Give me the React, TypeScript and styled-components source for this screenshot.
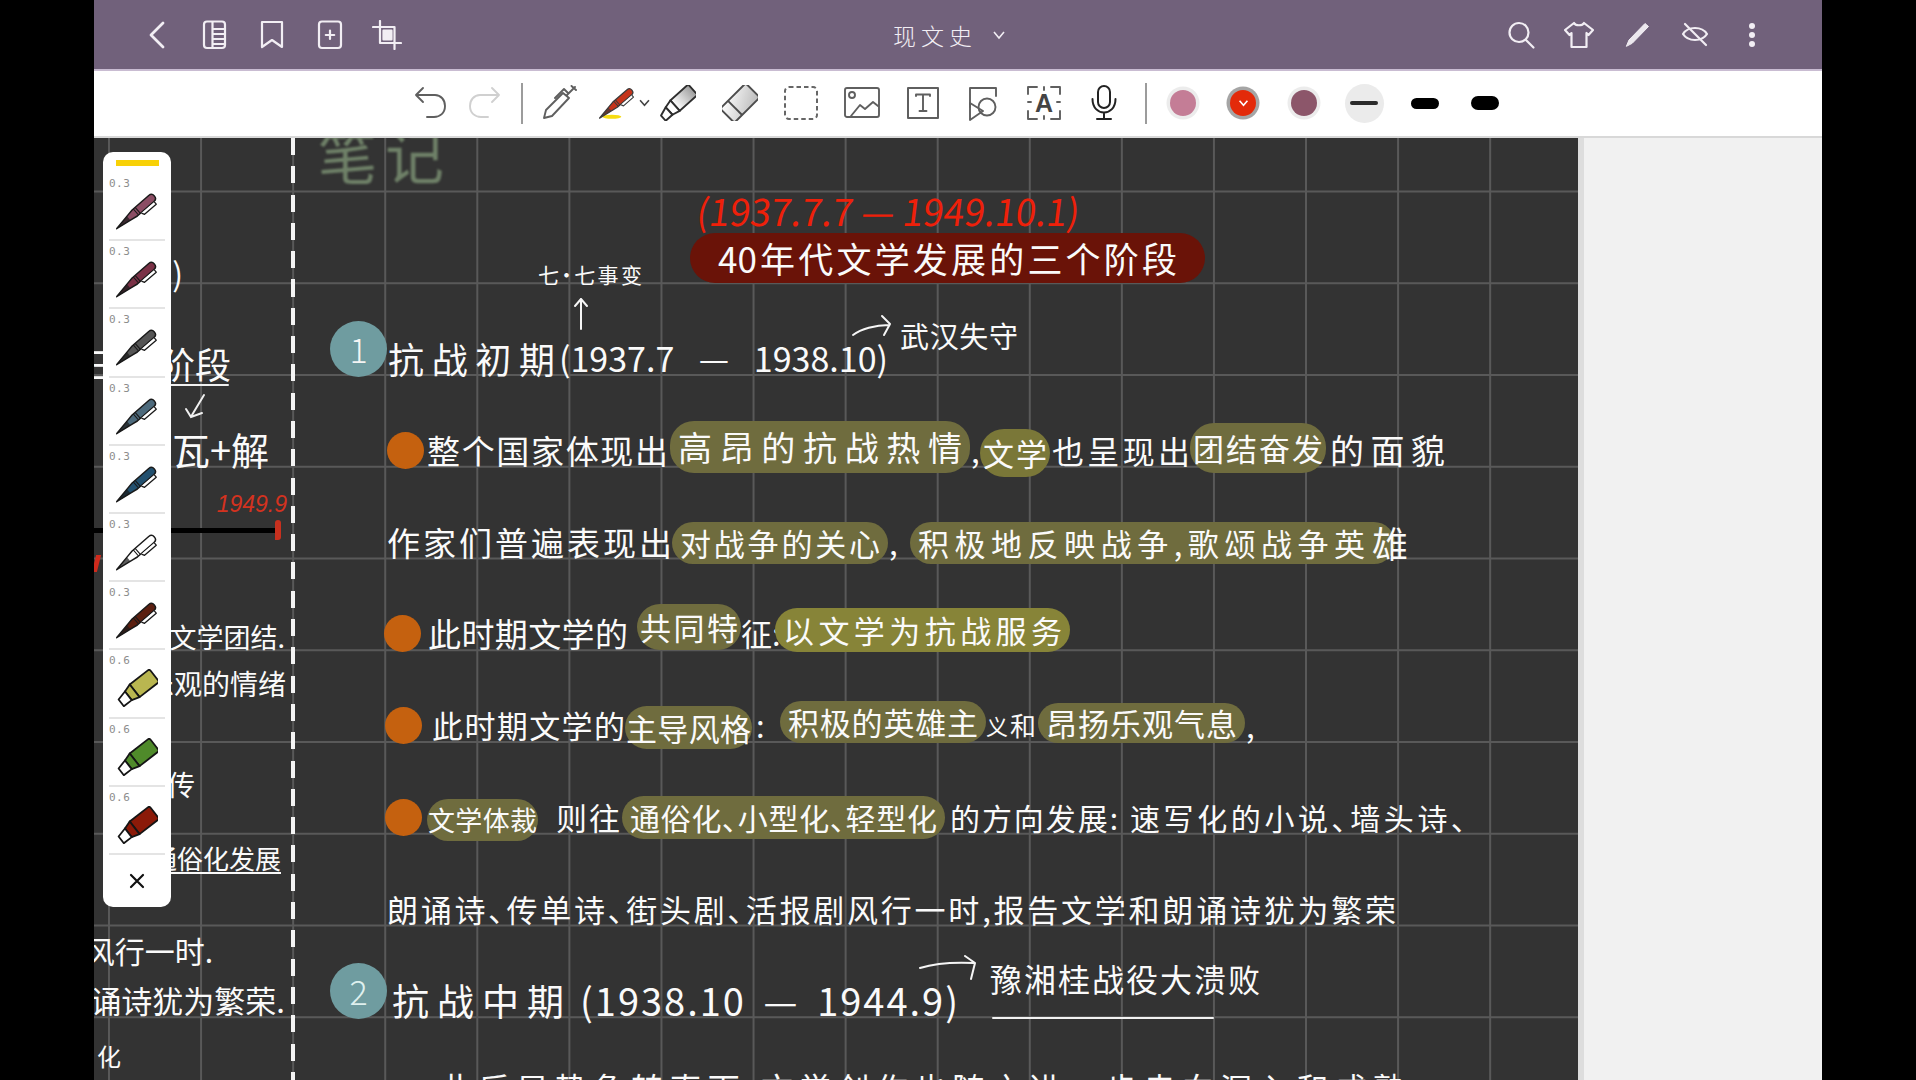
import React from "react";
import styled, { createGlobalStyle } from "styled-components";

const Global = createGlobalStyle`
  html, body { margin: 0; padding: 0; background: #000; }
  * { box-sizing: border-box; }
`;

const hand = `"Noto Sans CJK SC", "Noto Sans", sans-serif`;

const Page = styled.div`
  width: 1916px;
  height: 1080px;
  overflow: hidden;
  background: #000;
  display: flex;
  justify-content: center;
`;
const App2 = styled.div`
  width: 1728px;
  height: 100%;
  display: flex;
  flex-direction: column;
  background: #fff;
`;
const TopBar = styled.header`
  height: 71px;
  flex: none;
  background: #71617b;
  border-bottom: 2px solid #c9bcd2;
  display: flex;
  align-items: center;
  padding: 0 42px 0 34px;
`;
const IconGroup = styled.div`
  display: flex;
  align-items: center;
`;
const TopSlot = styled.div`
  width: 57.6px;
  height: 40px;
  display: flex;
  align-items: center;
  justify-content: center;
  svg { width: 30px; height: 30px; fill: none; stroke: #f2eef4; stroke-width: 2.2; stroke-linecap: round; stroke-linejoin: round; }
`;
const TitleGroup = styled.div`
  margin-left: 477px;
  display: flex;
  align-items: center;
  gap: 15px;
  color: #f2eef4;
  font: 300 23px ${hand};
  letter-spacing: 5px;
  svg { width: 14px; height: 10px; fill: none; stroke: #f2eef4; stroke-width: 1.6; }
`;
const RightGroup = styled(IconGroup)`
  margin-left: auto;
  margin-right: -1px;
`;
const ToolBar = styled.div`
  height: 67px;
  flex: none;
  background: #fff;
  display: flex;
  align-items: center;
  padding: 0 0 3px 308px;
`;
const Tool = styled.div<{ $w?: number }>`
  width: ${(p) => p.$w ?? 60.6}px;
  flex: none;
  height: 44px;
  position: relative;
  display: flex;
  align-items: center;
  justify-content: center;
  svg { width: 36px; height: 36px; }
`;
const Sep = styled.div<{ $l: number; $r: number }>`
  width: 2px;
  height: 41px;
  flex: none;
  background: #9c9c9c;
  margin: 0 ${(p) => p.$r}px 0 ${(p) => p.$l}px;
`;
const ToolCaret = styled.svg`
  position: absolute;
  right: -3px;
  top: 18px;
  && { width: 13px; height: 8px; }
  fill: none;
  stroke: #444;
  stroke-width: 1.8;
`;
const ColorDot = styled.div<{ $c: string; $ring: string }>`
  width: 26px;
  height: 26px;
  border-radius: 50%;
  background: ${(p) => p.$c};
  box-shadow: 0 0 0 3.5px ${(p) => p.$ring};
  display: flex;
  align-items: center;
  justify-content: center;
  svg { width: 11px; height: 8px; fill: none; stroke: #fff; stroke-width: 2; }
`;
const ThickBack = styled.div`
  width: 39px;
  height: 39px;
  border-radius: 50%;
  background: #ebebeb;
  display: flex;
  align-items: center;
  justify-content: center;
`;
const Thick = styled.div<{ $h: number }>`
  width: 28px;
  height: ${(p) => p.$h}px;
  border-radius: ${(p) => p.$h / 2}px;
  background: ${(p) => (p.$h < 6 ? "#2b2b2b" : "#000")};
`;
const Workspace = styled.div`
  flex: 1;
  min-height: 0;
  display: flex;
  border-top: 2px solid #d8d8d8;
  margin-top: -2px;
`;
const Canvas = styled.main`
  width: 1484px;
  flex: none;
  position: relative;
  overflow: hidden;
  display: flex;
  color: #fafafa;
  font-family: ${hand};
  font-weight: 400;
  font-feature-settings: "palt";
  background-color: #333333;
  background-image: linear-gradient(to right, #595959 2px, transparent 2px),
    linear-gradient(to bottom, #595959 2px, transparent 2px);
  background-size: 92.08px 91.75px;
  background-position: 14px 52.5px;
`;
const Side = styled.aside`
  flex: 1;
  background: #f1f1f1;
  border-left: 6px solid #dddddd;
`;
const LeftNotes = styled.section`
  width: 197px;
  flex: none;
  overflow: hidden;
  display: flex;
  flex-direction: column;
  position: relative;
`;
const LeftLine = styled.div<{ $mt: number; $h: number; $right: number; $size: number }>`
  flex: none;
  margin-top: ${(p) => p.$mt}px;
  height: ${(p) => p.$h}px;
  line-height: ${(p) => p.$h}px;
  padding-right: ${(p) => p.$right}px;
  font-size: ${(p) => p.$size}px;
  text-align: right;
  white-space: nowrap;
  display: flex;
  justify-content: flex-end;
`;
const LeftRed = styled(LeftLine)`
  color: #d4321f;
  font-style: italic;
  font-family: "Liberation Sans", sans-serif;
  font-weight: 400;
`;
const LeftUnder = styled(LeftLine)`
  text-decoration: underline;
  text-decoration-thickness: 2px;
  text-underline-offset: 3px;
`;
const LeftRule = styled.div`
  flex: none;
  margin-top: 6px;
  width: 181px;
  height: 5px;
  background: #000;
`;
const LeftSketch = styled.svg`
  flex: none;
  display: block;
  margin-top: 2px;
  margin-bottom: 2px;
  width: 197px;
  height: 40px;
  fill: none;
  stroke: #f0f0f0;
  stroke-width: 2;
  stroke-linecap: round;
`;
const RedMark = styled.div`
  position: absolute;
  left: 181px;
  top: 382px;
  width: 6px;
  height: 20px;
  border-radius: 3px 3px 3px 0;
  background: #c8301e;
`;
const RedSliver = styled.div`
  position: absolute;
  left: 0;
  top: 417px;
  width: 5px;
  height: 17px;
  background: #cf2a1c;
  transform: skewX(-14deg);
`;
const Divider = styled.div`
  width: 4px;
  flex: none;
  background-image: repeating-linear-gradient(to bottom, #f4f4f4 0, #f4f4f4 17px, transparent 17px, transparent 28.3px);
`;
const MainNotes = styled.section`
  flex: 1;
  min-width: 0;
  display: flex;
  flex-direction: column;
`;
const TitleRow = styled.div`
  flex: none;
  height: 54px;
  padding: 0 0 14px 23px;
  display: flex;
  align-items: flex-end;
`;
const BigTitle = styled.div`
  color: #6f8168;
  font-size: 59px;
  line-height: 60px;
  letter-spacing: 8px;
  margin-bottom: -6px;
  filter: blur(0.8px);
`;
const DateRow = styled.div`
  flex: none;
  height: 41px;
  padding-left: 402px;
  color: #ee200a;
  font-size: 37px;
  font-weight: 400;
  line-height: 36px;
  white-space: nowrap;
  transform: skewX(-7deg);
`;
const PillTitle = styled.div`
  flex: none;
  margin-left: 395px;
  width: 515px;
  height: 50px;
  line-height: 50px;
  border-radius: 25px;
  padding: 0 28px;
  background: #6a1308;
  font-size: 35px;
  text-align-last: justify;
`;
const Line = styled.div<{ $h?: number }>`
  flex: none;
  height: ${(p) => p.$h ?? 91.75}px;
  position: relative;
  display: flex;
  align-items: flex-end;
`;
const Seg = styled.span<{ $gap: number; $w: number; $hl?: string; $pad?: number; $padR?: number; $size?: number; $drop?: number; $h?: number; $track?: number }>`
  flex: none;
  margin-left: ${(p) => p.$gap}px;
  width: ${(p) => p.$w}px;
  height: ${(p) => p.$h ?? 46}px;
  line-height: ${(p) => p.$h ?? 46}px;
  margin-bottom: ${(p) => -(p.$drop ?? 5)}px;
  padding: 0 ${(p) => p.$padR ?? p.$pad ?? (p.$hl ? 8 : 0)}px 0 ${(p) => p.$pad ?? (p.$hl ? 8 : 0)}px;
  font-size: ${(p) => p.$size ?? 31}px;
  letter-spacing: ${(p) => p.$track ?? 0}px;
  background: ${(p) => p.$hl ?? "transparent"};
  border-radius: 24px;
  text-align-last: justify;
`;
const Bullet = styled.span<{ $gap: number }>`
  flex: none;
  margin-left: ${(p) => p.$gap}px;
  width: 37px;
  height: 37px;
  margin-bottom: -1px;
  border-radius: 50%;
  background: #c5610f;
`;
const NumberBadge = styled.span<{ $gap: number; $c: string }>`
  flex: none;
  margin-left: ${(p) => p.$gap}px;
  width: 57px;
  height: 56px;
  margin-bottom: -1px;
  border-radius: 50%;
  background: #6f9ca0;
  color: ${(p) => p.$c};
  font-size: 34px;
  font-weight: 300;
  line-height: 56px;
  text-align: center;
`;
const Note = styled.span<{ $left: number; $top: number; $w: number; $size: number }>`
  position: absolute;
  left: ${(p) => p.$left}px;
  top: ${(p) => p.$top}px;
  width: ${(p) => p.$w}px;
  font-size: ${(p) => p.$size}px;
  line-height: 1.15;
  text-align-last: justify;
`;
const NoteArrow = styled.svg<{ $left: number; $top: number }>`
  position: absolute;
  left: ${(p) => p.$left}px;
  top: ${(p) => p.$top}px;
  fill: none;
  stroke: #f6f6f6;
  stroke-width: 2;
  stroke-linecap: round;
  stroke-linejoin: round;
`;
const NoteUnderline = styled.span`
  position: absolute;
  left: 697px;
  top: 90px;
  width: 222px;
  height: 2px;
  background: #f2f2f2;
  border-radius: 2px;
`;
const CutLine = styled.div`
  flex: none;
  padding: 47px 0 0 145px;
  font-size: 32px;
  line-height: 44px;
  width: 1110px;
  text-align-last: justify;
`;
const Tray = styled.nav`
  position: absolute;
  left: 9px;
  top: 14px;
  width: 68px;
  height: 755px;
  border-radius: 10px;
  background: #fff;
  padding: 8px 0 0;
  display: flex;
  flex-direction: column;
`;
const TrayBar = styled.div`
  width: 43px;
  height: 6px;
  margin: 0 auto 7px;
  background: #f8d106;
`;
const TrayItem = styled.div`
  height: 68.2px;
  flex: none;
  margin: 0 6px;
  border-bottom: 2px solid #e4e4e4;
  display: flex;
  flex-direction: column;
  align-items: center;
  padding-top: 4px;
  svg { width: 42px; height: 38px; margin-top: 1px; display: block; }
`;
const TrayLabel = styled.div`
  align-self: flex-start;
  color: #8d8d8d;
  font: 400 11px/14px "DejaVu Sans Mono", monospace;
  letter-spacing: 0.5px;
`;
const TrayClose = styled.div`
  flex: 1;
  display: flex;
  align-items: center;
  justify-content: center;
  svg { width: 16px; height: 16px; stroke: #111; stroke-width: 2.2; stroke-linecap: round; fill: none; }
`;

const PenShape = ({ color, dark = "#1a1a1a" }: { color: string; dark?: string }) => (
  <g transform="translate(21 19) rotate(-41)">
    <path d="M-27 0 L-9 -3 L-3 -4 H19 Q23 -4 23 0 Q23 4 19 4 H-3 L-9 3 Z" fill={color} stroke={dark} strokeWidth="1.5" strokeLinejoin="round" />
    <path d="M-1.5 -4 V4 M1 -4 V4" stroke={dark} strokeWidth="1.1" />
    <path d="M-27 0 L-11 -2.6 V2.6 Z" fill={dark} opacity=".7" />
    <path d="M2 4.5 L3.5 7.5 H19 V4.5" fill="#fff" stroke={dark} strokeWidth="1.3" strokeLinejoin="round" />
  </g>
);

const MarkerShape = ({ color }: { color: string }) => (
  <g transform="translate(21 20) rotate(-38)" stroke="#151515" strokeWidth="1.8" strokeLinejoin="round">
    <path d="M-3 -8 H20 Q22 -8 22 -6 V6 Q22 8 20 8 H-3 Z" fill={color} />
    <path d="M-3 -8 L-11 -5.5 V5.5 L-3 8 Z" fill={color} />
    <path d="M-11 -5.5 L-21 -3 L-21 5.5 H-11 Z" fill="#fff" />
  </g>
);

const Icons = {
  back: <svg viewBox="0 0 30 30"><path d="M21 3 L9 15 L21 27" strokeWidth="2.8" /></svg>,
  outline: <svg viewBox="0 0 30 30"><rect x="5" y="1.5" width="21" height="26.5" rx="3" /><path d="M13.5 2 V28 M13.5 9 H26 M13.5 14 H26 M13.5 19 H26 M13.5 24 H26" /></svg>,
  bookmark: <svg viewBox="0 0 30 30"><path d="M5 2 H25 V27 L15 20 L5 27 Z" /></svg>,
  add: <svg viewBox="0 0 30 30"><rect x="4" y="1.5" width="22" height="26.5" rx="3" /><path d="M15 10.5 V19 M10.8 15 H19.2" /></svg>,
  crop: <svg viewBox="0 0 30 30"><path d="M8 1 V23 H29 M1 7 H22.5 V29" /><rect x="11.5" y="10.5" width="8" height="9" fill="#f2eef4" /></svg>,
  search: <svg viewBox="0 0 30 30"><circle cx="12" cy="12.5" r="9.5" /><path d="M19 20 L26.5 27.5" /></svg>,
  shirt: <svg viewBox="0 0 30 30"><path d="M10 3 C11.5 6 18.5 6 20 3 L29 10 L24.5 15 L22.5 13 V27 H7.5 V13 L5.5 15 L1 10 Z" /></svg>,
  pen: <svg viewBox="0 0 30 30"><path d="M4.5 26 L7 20 L23 3.5 L26.5 6.5 L10.5 23 Z" fill="#ece8ee" strokeWidth="1" /></svg>,
  eye: <svg viewBox="0 0 30 30"><path d="M3 14 C8 6 22 6 27 14 C22 22 8 22 3 14 Z" /><path d="M5 4 L26 25" /></svg>,
  dots: <svg viewBox="0 0 30 30"><g fill="#f2eef4" stroke="none"><circle cx="15" cy="6" r="3" /><circle cx="15" cy="15" r="3" /><circle cx="15" cy="24" r="3" /></g></svg>,
};

const stroke = { fill: "none", stroke: "#5f5f5f", strokeWidth: 1.9, strokeLinecap: "round" as const, strokeLinejoin: "round" as const };

const Undo = ({ color }: { color: string }) => (
  <svg viewBox="0 0 36 36" {...stroke} stroke={color}><path d="M11 3 L4 10 L11 17 M4 10 H23 C29 10 33 15 33 21 C33 28 28 32 22 32 H15" /></svg>
);
const Redo = ({ color }: { color: string }) => (
  <svg viewBox="0 0 36 36" {...stroke} stroke={color}><path d="M25 3 L32 10 L25 17 M32 10 H13 C7 10 3 15 3 21 C3 28 8 32 14 32 H21" /></svg>
);

const ToolIcons = {
  pencil: <svg viewBox="0 0 36 36" {...stroke}><path d="M2 33 L4 25 L21 8 L27 13 L10 31 Z M25 10 L33 2 M29.5 1 L34 5 M13 13 L22 4 L26 8" /></svg>,
  pen: (
    <svg viewBox="0 0 42 38"><ellipse cx="15" cy="35" rx="11" ry="2.4" fill="#f6dc12" /><PenShape color="#c5341b" dark="#3b3b3b" /></svg>
  ),
  marker: (
    <svg viewBox="0 0 36 36">
      <defs><linearGradient id="mk" x1="0" y1="0" x2="1" y2="0"><stop offset="0" stopColor="#fff" /><stop offset="1" stopColor="#9d9d9d" /></linearGradient></defs>
      <g transform="translate(18 18) rotate(-42)" fill="#fff" stroke="#2e2e2e" strokeWidth="1.9" strokeLinejoin="round">
        <path d="M-4 -7 H20 V7 H-4 Z" fill="url(#mk)" /><path d="M-4 -7 L-12 -5 V5 L-4 7 Z" /><path d="M-12 -5 L-21 -2 V5 H-12 Z" />
      </g>
    </svg>
  ),
  eraser: (
    <svg viewBox="0 0 36 36">
      <defs><linearGradient id="er" x1="0" y1="0" x2="1" y2="1"><stop offset="0" stopColor="#fff" /><stop offset="1" stopColor="#b9b9b9" /></linearGradient></defs>
      <g transform="translate(18 18) rotate(-45)" stroke="#4d4d4d" strokeWidth="1.9">
        <rect x="-18" y="-10" width="36" height="20" rx="2.5" fill="url(#er)" /><path d="M-7 -10 V10" />
      </g>
    </svg>
  ),
  lasso: <svg viewBox="0 0 36 36"><rect x="2" y="2" width="32" height="32" rx="4" fill="none" stroke="#666" strokeWidth="2" strokeDasharray="4.5 3" /></svg>,
  image: <svg viewBox="0 0 36 36" {...stroke}><rect x="1" y="3" width="34" height="29" rx="2" /><circle cx="8" cy="10" r="3" /><path d="M7 31 L16 20 L21 24 L29 17 L34 21" /></svg>,
  text: <svg viewBox="0 0 36 36" {...stroke}><rect x="3" y="3" width="30" height="30" strokeWidth="2" /><path d="M11 11 V9.5 H25 V11 M18 9.5 V26 M14.5 26 H21.5" /></svg>,
  shape: <svg viewBox="0 0 36 36" {...stroke}><path d="M5 22 V3 H31 V11" /><circle cx="22" cy="22" r="8.5" /><path d="M5 18 L18 26 L5 35 Z" /></svg>,
  ocr: (
    <svg viewBox="0 0 36 36" {...stroke}>
      <path d="M2 9 V2 H11 M25 2 H34 V9 M2 26 V34 H11 M25 34 H34 V26 M18 2 V5 M18 31 V34 M2 17 H5 M31 17 H34" />
      <text x="18" y="27" textAnchor="middle" fontFamily="Liberation Sans" fontWeight="700" fontSize="25" fill="#444" stroke="none">A</text>
    </svg>
  ),
  mic: <svg viewBox="0 0 36 36" fill="none" stroke="#222" strokeWidth="2" strokeLinecap="round"><rect x="12" y="1" width="12" height="22" rx="6" /><path d="M6.5 14 C6.5 32 29.5 32 29.5 14 M18 28 V34 M11 34 H25" /></svg>,
};

const Caret = () => <svg viewBox="0 0 14 10"><path d="M2 2 L7 8 L12 2" /></svg>;

type S = { x: number; e: number; t: string; hl?: string; size?: number; drop?: number; h?: number; track?: number; pad?: number; padR?: number };

const HL = "#6f6c3e";
const HL2 = "#7a7738";
const HL3 = "#878438";
const ORIGIN = 295;

const NoteRow = ({ segs, bullet, children }: { segs: S[]; bullet?: number; children?: React.ReactNode }) => {
  let end = ORIGIN;
  const items: React.ReactNode[] = [];
  if (bullet) {
    items.push(<Bullet key="b" $gap={bullet - end} />);
    end = bullet + 37;
  }
  segs.forEach((s, i) => {
    items.push(
      <Seg key={i} $gap={s.x - end} $w={s.e - s.x} $hl={s.hl} $pad={s.pad} $padR={s.padR} $size={s.size} $drop={s.drop} $h={s.h} $track={s.track}>
        {s.t}
      </Seg>
    );
    end = s.e;
  });
  return (
    <Line>
      {items}
      {children}
    </Line>
  );
};

const pens: [string, string][] = [
  ["0.3", "#8b4d64"],
  ["0.3", "#7a3146"],
  ["0.3", "#555555"],
  ["0.3", "#4d6a7c"],
  ["0.3", "#22506f"],
  ["0.3", "#ffffff"],
  ["0.3", "#5b1f10"],
];
const markers: [string, string][] = [
  ["0.6", "#b9b650"],
  ["0.6", "#4f8a2a"],
  ["0.6", "#8b1a08"],
];

export default function App() {
  return (
    <Page>
      <Global />
      <App2>
        <TopBar>
          <IconGroup>
            <TopSlot>{Icons.back}</TopSlot>
            <TopSlot>{Icons.outline}</TopSlot>
            <TopSlot>{Icons.bookmark}</TopSlot>
            <TopSlot>{Icons.add}</TopSlot>
            <TopSlot>{Icons.crop}</TopSlot>
          </IconGroup>
          <TitleGroup>
            现文史
            <Caret />
          </TitleGroup>
          <RightGroup>
            <TopSlot>{Icons.search}</TopSlot>
            <TopSlot>{Icons.shirt}</TopSlot>
            <TopSlot>{Icons.pen}</TopSlot>
            <TopSlot>{Icons.eye}</TopSlot>
            <TopSlot>{Icons.dots}</TopSlot>
          </RightGroup>
        </TopBar>
        <ToolBar>
          <Tool $w={55}><Undo color="#5f5f5f" /></Tool>
          <Tool $w={55}><Redo color="#d0d0d0" /></Tool>
          <Sep $l={9} $r={9} />
          <Tool $w={55}>{ToolIcons.pencil}</Tool>
          <Tool>
            {ToolIcons.pen}
            <ToolCaret viewBox="0 0 14 9"><path d="M2 1.5 L7 7 L12 1.5" /></ToolCaret>
          </Tool>
          <Tool>{ToolIcons.marker}</Tool>
          <Tool $w={63}>{ToolIcons.eraser}</Tool>
          <Tool>{ToolIcons.lasso}</Tool>
          <Tool>{ToolIcons.image}</Tool>
          <Tool>{ToolIcons.text}</Tool>
          <Tool>{ToolIcons.shape}</Tool>
          <Tool>{ToolIcons.ocr}</Tool>
          <Tool>{ToolIcons.mic}</Tool>
          <Sep $l={10} $r={6} />
          <Tool $w={60.4}><ColorDot $c="#c47d96" $ring="#ececec" /></Tool>
          <Tool $w={60.4}>
            <ColorDot $c="#e32a0a" $ring="#a5a5a5"><Caret /></ColorDot>
          </Tool>
          <Tool $w={60.4}><ColorDot $c="#8c566a" $ring="#ececec" /></Tool>
          <Tool $w={60.4}><ThickBack><Thick $h={4} /></ThickBack></Tool>
          <Tool $w={60.4}><Thick $h={11} /></Tool>
          <Tool $w={60.4}><Thick $h={14} /></Tool>
        </ToolBar>
        <Workspace>
          <Canvas>
            <LeftNotes>
              <LeftLine $mt={117} $h={35} $right={108} $size={32}>)</LeftLine>
              <LeftLine $mt={55} $h={36} $right={60} $size={36}>三个阶段</LeftLine>
              <LeftSketch viewBox="0 0 197 40">
                <path d="M70 2 H134 M110 12 L98 32 M92 26 L97 34 L108 30" />
              </LeftSketch>
              <LeftLine $mt={0} $h={47} $right={22} $size={38}>瓦+解</LeftLine>
              <LeftRed $mt={15} $h={35} $right={4} $size={23}>1949.9</LeftRed>
              <LeftRule />
              <LeftLine $mt={88} $h={32} $right={6} $size={27}>文学团结.</LeftLine>
              <LeftLine $mt={12} $h={37} $right={5} $size={28}>乐观的情绪</LeftLine>
              <LeftLine $mt={66} $h={32} $right={96} $size={28}>宣传</LeftLine>
              <LeftUnder $mt={40} $h={35} $right={10} $size={26}>通俗化发展</LeftUnder>
              <LeftLine $mt={58} $h={34} $right={78} $size={30}>风行一时.</LeftLine>
              <LeftLine $mt={14} $h={38} $right={6} $size={31}>诵诗犹为繁荣.</LeftLine>
              <LeftLine $mt={25} $h={24} $right={170} $size={24}>化</LeftLine>
              <RedMark />
              <RedSliver />
            </LeftNotes>
            <Divider />
            <MainNotes>
              <TitleRow><BigTitle>笔记</BigTitle></TitleRow>
              <DateRow>(1937.7.7 — 1949.10.1)</DateRow>
              <PillTitle>40年代文学发展的三个阶段</PillTitle>

              <Line $h={93}>
                <NumberBadge $gap={35} $c="#f4f4f4">1</NumberBadge>
                <Seg $gap={1} $w={167} $size={36}>抗战初期</Seg>
                <Seg $gap={4} $w={329} $size={34}>(1937.7 — 1938.10)</Seg>
                <Note $left={243} $top={-21} $w={104} $size={21}>七·七事变</Note>
                <NoteArrow $left={278} $top={14} width="16" height="34" viewBox="0 0 16 34"><path d="M8 2 V32 M2 9 L8 2 L14 9" /></NoteArrow>
                <NoteArrow $left={556} $top={30} width="44" height="26" viewBox="0 0 44 26"><path d="M2 22 C10 16 24 12 38 12 M31 3 L39 11 L33 22" /></NoteArrow>
                <Note $left={605} $top={36} $w={118} $size={29}>武汉失守</Note>
              </Line>

              <NoteRow
                bullet={387}
                segs={[
                  { x: 427, e: 668, t: "整个国家体现出", size: 33 },
                  { x: 670, e: 970, t: "高昂的抗战热情", hl: HL, size: 34, h: 52, drop: 5 },
                  { x: 971, e: 980, t: "," },
                  { x: 980, e: 1050, t: "文学", hl: HL2, h: 48, drop: 9, pad: 3 },
                  { x: 1052, e: 1190, t: "也呈现出", size: 32 },
                  { x: 1190, e: 1326, t: "团结奋发", hl: HL, h: 50, drop: 5, pad: 3 },
                  { x: 1330, e: 1445, t: "的面貌", size: 34 },
                ]}
              />
              <NoteRow
                segs={[
                  { x: 387, e: 672, t: "作家们普遍表现出", size: 33 },
                  { x: 672, e: 888, t: "对战争的关心", hl: HL, h: 42, drop: 4 },
                  { x: 889, e: 908, t: "," },
                  { x: 910, e: 1395, t: "积极地反映战争,歌颂战争英", hl: HL, h: 42, drop: 4, padR: 30 },
                  { x: 1372, e: 1415, t: "雄", size: 36 },
                ]}
              />
              <NoteRow
                bullet={384}
                segs={[
                  { x: 428, e: 628, t: "此时期文学的", size: 33 },
                  { x: 637, e: 741, t: "共同特", hl: HL, h: 46, drop: -1, pad: 3 },
                  { x: 741, e: 775, t: "征:" },
                  { x: 775, e: 1070, t: "以文学为抗战服务", hl: HL3, h: 44, drop: 1 },
                ]}
              />
              <NoteRow
                bullet={385}
                segs={[
                  { x: 432, e: 625, t: "此时期文学的" },
                  { x: 625, e: 752, t: "主导风格", hl: HL, h: 43, drop: 6, pad: 1 },
                  { x: 756, e: 772, t: ":" },
                  { x: 780, e: 986, t: "积极的英雄主", hl: HL, h: 42, drop: 0 },
                  { x: 986, e: 1008, t: "义", size: 22 },
                  { x: 1010, e: 1036, t: "和", size: 26 },
                  { x: 1038, e: 1245, t: "昂扬乐观气息", hl: HL, h: 40, drop: 0 },
                  { x: 1246, e: 1260, t: "," },
                ]}
              />
              <NoteRow
                bullet={385}
                segs={[
                  { x: 427, e: 538, t: "文学体裁", hl: HL, h: 42, drop: 6, size: 27, pad: 1 },
                  { x: 556, e: 620, t: "则往" },
                  { x: 622, e: 945, t: "通俗化、小型化、轻型化", hl: HL, h: 43, drop: 4, size: 30 },
                  { x: 950, e: 1118, t: "的方向发展:", size: 30 },
                  { x: 1130, e: 1466, t: "速写化的小说、墙头诗、", size: 30 },
                ]}
              />
              <NoteRow segs={[{ x: 387, e: 1396, t: "朗诵诗、传单诗、街头剧、活报剧风行一时,报告文学和朗诵诗犹为繁荣" }]} />

              <Line>
                <NumberBadge $gap={35} $c="#dff0ee">2</NumberBadge>
                <Seg $gap={5} $w={172} $size={37}>抗战中期</Seg>
                <Seg $gap={16} $w={380} $size={38} $track={2}>(1938.10 — 1944.9)</Seg>
                <NoteArrow $left={623} $top={28} width="62" height="30" viewBox="0 0 62 30"><path d="M2 13 C18 8 36 7 56 8 M47 1 L57 8 L53 24" /></NoteArrow>
                <Note $left={695} $top={33} $w={270} $size={32}>豫湘桂战役大溃败</Note>
                <NoteUnderline />
              </Line>
              <CutLine>此后局势急转直下,文学创作也随之进一步走向深入和成熟</CutLine>
            </MainNotes>
            <Tray>
              <TrayBar />
              {pens.map(([label, color], i) => (
                <TrayItem key={i}>
                  <TrayLabel>{label}</TrayLabel>
                  <svg viewBox="0 0 42 38"><PenShape color={color} /></svg>
                </TrayItem>
              ))}
              {markers.map(([label, color], i) => (
                <TrayItem key={i}>
                  <TrayLabel>{label}</TrayLabel>
                  <svg viewBox="0 0 42 38"><MarkerShape color={color} /></svg>
                </TrayItem>
              ))}
              <TrayClose>
                <svg viewBox="0 0 16 16"><path d="M2 2 L14 14 M14 2 L2 14" /></svg>
              </TrayClose>
            </Tray>
          </Canvas>
          <Side />
        </Workspace>
      </App2>
    </Page>
  );
}
